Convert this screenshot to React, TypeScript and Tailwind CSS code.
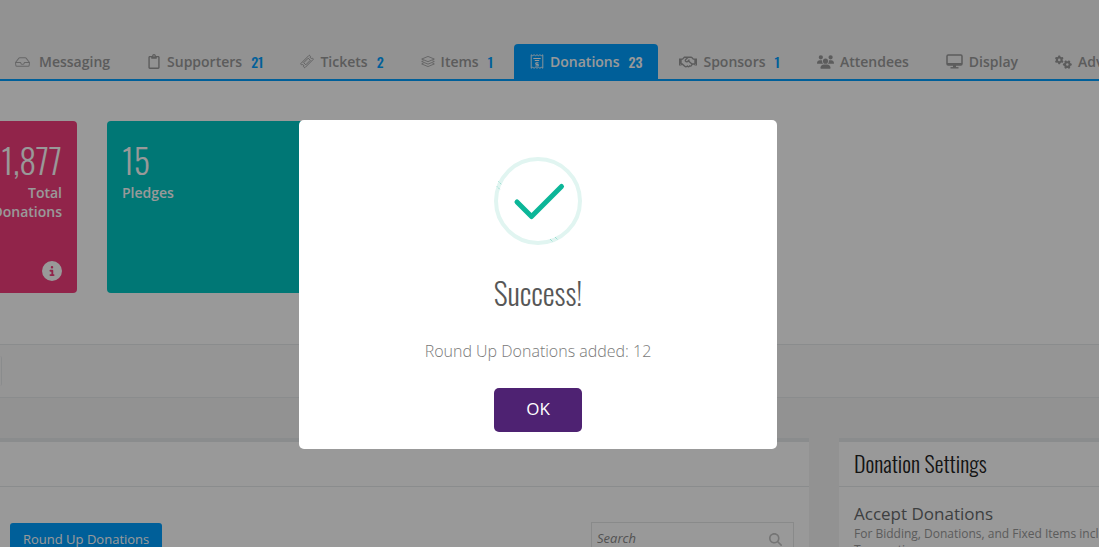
import React from "react";
import { BsInbox } from "react-icons/bs";
import { FaRegClipboard, FaRegHandshake } from "react-icons/fa";
import { FaCircleInfo, FaGears, FaMagnifyingGlass, FaUsers } from "react-icons/fa6";

type IconProps = { className?: string };

interface Tab {
  label: string;
  icon: React.ReactNode;
  count?: number;
  active?: boolean;
}

const TicketIcon: React.FC<IconProps> = ({ className }) => (
  <svg viewBox="0 0 16 16" className={className} fill="none" stroke="currentColor" strokeWidth="1" aria-hidden="true">
    <path d="M10.2 1.1 1.1 10.2a.6.6 0 0 0 0 .9l.9.9a1.4 1.4 0 0 1 2 2l.9.9a.6.6 0 0 0 .9 0l9.1-9.1a.6.6 0 0 0 0-.9l-.9-.9a1.4 1.4 0 0 1-2-2l-.9-.9a.6.6 0 0 0-.9 0Z" />
    <path d="m9.4 4.2 2.4 2.4-5.2 5.2-2.4-2.4Z" />
  </svg>
);

const LayersIcon: React.FC<IconProps> = ({ className }) => (
  <svg viewBox="0 0 16 14" className={className} fill="none" stroke="currentColor" strokeWidth="0.9" strokeLinejoin="round" aria-hidden="true">
    <path d="M8 1.2 15.2 4.2 8 7.2.8 4.2Z" />
    <path d="M2.9 6.1.8 7 8 10l7.2-3-2.1-.9" />
    <path d="M2.9 8.9.8 9.8l7.2 3 7.2-3-2.1-.9" />
  </svg>
);

const ReceiptIcon: React.FC<IconProps> = ({ className }) => (
  <svg viewBox="0 0 13 15" className={className} fill="none" stroke="currentColor" strokeWidth="0.9" aria-hidden="true">
    <path d="M.7.8 2.1 1.7 3.6.8 5 1.7 6.5.8 8 1.7 9.4.8l1.5.9L12.3.8v13.4l-1.4-.9-1.5.9-1.4-.9-1.5.9-1.5-.9-1.4.9-1.5-.9-1.4.9Z" />
    <path d="M2.8 4.5h7.4M4.3 6.5h4.4" strokeWidth="1" />
    <path d="M8 8.8H6a.8.8 0 0 0 0 1.6h1a.8.8 0 0 1 0 1.6H5" strokeWidth="1.1" />
  </svg>
);

const DesktopIcon: React.FC<IconProps> = ({ className }) => (
  <svg viewBox="0 0 17 15" className={className} fill="none" stroke="currentColor" aria-hidden="true">
    <rect x="1" y="1" width="15" height="10" rx="1.2" strokeWidth="1.5" />
    <path d="M1 9.9h15" strokeWidth="1.8" />
    <path d="M8.5 11v2.5" strokeWidth="3" />
    <path d="M4.5 13.8h8" strokeWidth="1.4" />
  </svg>
);

const tabs: Tab[] = [
  { label: "Messaging", icon: <BsInbox className="w-[18px] h-4 pr-[3px] opacity-80" /> },
  { label: "Supporters", icon: <FaRegClipboard className="w-3.5 h-[15px]" />, count: 21 },
  { label: "Tickets", icon: <TicketIcon className="w-3.5 h-[15px]" />, count: 2 },
  { label: "Items", icon: <LayersIcon className="w-3.5 h-[15px]" />, count: 1 },
  { label: "Donations", icon: <ReceiptIcon className="w-3.5 h-[15px]" />, count: 23, active: true },
  { label: "Sponsors", icon: <FaRegHandshake className="w-[18px] h-4" />, count: 1 },
  { label: "Attendees", icon: <FaUsers className="w-[17px] h-4" /> },
  { label: "Display", icon: <DesktopIcon className="w-[17px] h-[15px]" /> },
  { label: "Advanced", icon: <FaGears className="w-[17px] h-4" /> },
];

const condensed = "font-['Oswald','Open_Sans_Condensed','Liberation_Sans_Narrow',sans-serif]";

const NavTabs: React.FC = () => (
  <nav className="flex items-end gap-[5px] border-b-2 border-[#009fff] bg-[#f3f3f4] pt-11 -ml-px">
    {tabs.map((tab) => (
      <a
        key={tab.label}
        href="#"
        className={`flex h-[35px] shrink-0 items-center gap-1.5 rounded-t px-4 text-sm font-semibold ${
          tab.active ? "bg-[#009fff] text-white" : "text-[#999]"
        }`}
      >
        {tab.icon}
        <span>{tab.label}</span>
        {tab.count !== undefined && (
          <span className={`${condensed} ml-[3px] font-medium ${tab.active ? "text-white" : "text-[#009fff]"}`}>
            {tab.count}
          </span>
        )}
      </a>
    ))}
  </nav>
);

const SuccessModal: React.FC = () => (
  <div className="fixed inset-0 flex items-center justify-center bg-black/40 pr-[23px] pt-[22px]">
    <div
      role="dialog"
      aria-modal="true"
      aria-labelledby="modal-title"
      className="flex w-full max-w-[478px] flex-col items-center rounded-[5px] bg-white px-5 pb-[17px] pt-[37px]"
    >
      <svg viewBox="0 0 88 88" className="size-[88px]" fill="none" aria-hidden="true">
        <circle cx="44" cy="44" r="42" stroke="#e1f5f1" strokeWidth="4" />
        <path d="m4.5 24.5 3 3M3 29.5l3 3M56 82l3 3M61 80l3 3" stroke="#6fd0bc" strokeWidth="0.9" strokeDasharray="1 1" />
        <path d="M23 45 37.5 59.5 67.5 29.5" stroke="#0cb698" strokeWidth="5" strokeLinecap="round" strokeLinejoin="round" />
      </svg>
      <h2 id="modal-title" className={`${condensed} mt-6 text-[30px] font-light leading-[48px] text-[#575757]`}>
        Success!
      </h2>
      <p className="mt-[22px] text-base font-light leading-6 text-[#797979]">Round Up Donations added: 12</p>
      <button
        type="button"
        className="mt-[25px] h-11 rounded-[5px] bg-[#4e2272] px-8 pb-0.5 text-[17px] font-medium text-white"
      >
        OK
      </button>
    </div>
  </div>
);

const App: React.FC = () => {
  return (
    <div className="h-screen overflow-hidden bg-[#f3f3f4] font-['Open_Sans',sans-serif]">
      <NavTabs />

      {/* Summary cards */}
      <section className="-ml-[121px] flex gap-[30px] bg-white pb-[51px] pt-10">
        <div className="flex h-[172px] w-[198px] shrink-0 flex-col items-end rounded bg-[#f23c7c] p-[15px] pb-3 text-right text-white">
          <div className={`${condensed} text-[34px] font-light leading-[47px]`}>1,877</div>
          <div className="w-20 text-sm font-semibold leading-[19px]">Total Donations</div>
          <FaCircleInfo className="mt-auto size-5" />
        </div>
        <div className="h-[172px] w-[198px] shrink-0 rounded bg-[#00c6c4] p-[15px] text-white">
          <div className={`${condensed} text-[34px] font-light leading-[47px]`}>15</div>
          <div className="text-sm font-semibold leading-[19px]">Pledges</div>
        </div>
      </section>

      <div className="border-y border-[#e7eaec] bg-[#f9f9f9] py-[11px]">
        <div className="h-[30px] w-0.5 rounded-r border-r border-[#e7eaec]" />
      </div>

      <main className="mt-10 flex gap-[30px]">
        <section className="flex-1 border-t-4 border-[#e7eaec] bg-white">
          <div className="h-[45px] border-b border-[#e7eaec]" />
          <div className="flex items-start justify-between px-[15px] pl-2.5 pt-[35px]">
            <button
              type="button"
              className="mt-px h-[34px] rounded-[3px] bg-[#009fff] px-[13px] text-[13px] text-white"
            >
              Round Up Donations
            </button>
            <label className="flex h-[34px] w-[203px] items-center border border-[#e5e6e7] bg-white px-[5px]">
              <input
                type="search"
                aria-label="Search"
                placeholder="Search"
                className="min-w-0 flex-1 text-[13px] italic outline-none placeholder:text-[#8a8a8a]"
              />
              <FaMagnifyingGlass className="mr-1.5 size-[13px] text-[#c4c4c4]" />
            </label>
          </div>
        </section>

        <aside className="w-[260px] shrink-0 overflow-hidden border-t-4 border-[#e7eaec] bg-white">
          <div className="h-[45px] border-b border-[#e7eaec] px-[15px]">
            <h5 className={`${condensed} text-[22px] font-light leading-[43px] text-[#222]`}>Donation Settings</h5>
          </div>
          <div className="w-[330px] px-[15px] pt-3.5">
            <h3 className="text-[17px] leading-[25px] text-[#676a6c]">Accept Donations</h3>
            <p className="text-xs leading-4 text-[#999]">
              For Bidding, Donations, and Fixed Items including Transactions
            </p>
          </div>
        </aside>
      </main>

      <SuccessModal />
    </div>
  );
};

export default App;
